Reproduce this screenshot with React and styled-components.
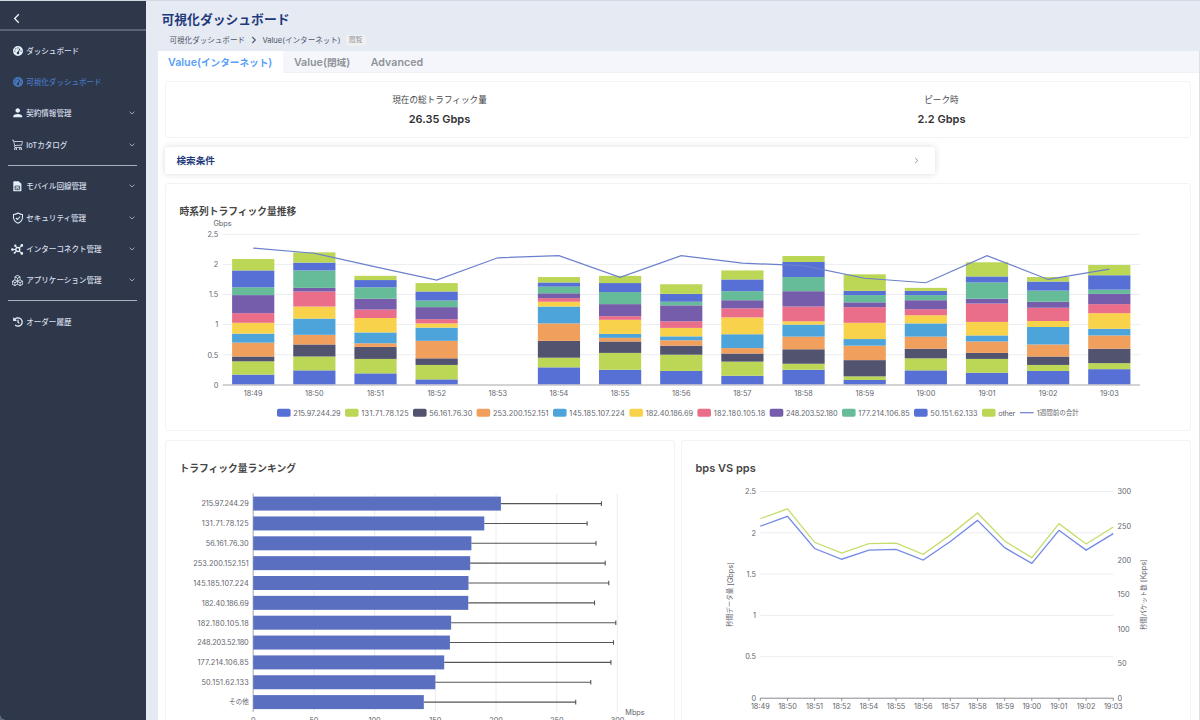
import styled, { createGlobalStyle } from 'styled-components'
import { FaGaugeHigh } from 'react-icons/fa6'
import { FaHistory } from 'react-icons/fa'
import { BsBoxes, BsCart3 } from 'react-icons/bs'
import { MdPerson } from 'react-icons/md'

const GlobalStyle = createGlobalStyle`
    * {
        box-sizing: border-box;
    }
    body {
        margin: 0;
        overflow: hidden;
        font-family: Inter, "Noto Sans CJK JP", sans-serif;
        color: #303133;
        background-color: #55706f;
    }
`
const Page = styled.div`
    display: flex;
    width: 1200px;
    height: 720px;
    overflow: hidden;
    background-color: #e6eaf3;
    border-top: 1px solid #d3d7e1;
    border-bottom-left-radius: 5px;
`
const Sidebar = styled.nav`
    width: 146px;
    flex-shrink: 0;
    margin-top: -1px;
    background-color: #2f374b;
    color: #dfe6f0;
`
const SidebarTop = styled.div`
    height: 31px;
    padding: 8px 0 0 12px;
    border-bottom: 2px solid #5b6273;
`
const MenuGroup = styled.div`
    margin: 0 9px 0 8px;
    padding: ${props => props.pad || '5px 0'};
    border-bottom: ${props => props.last ? 'none' : '1px solid #a9b1bd'};
`
const MenuItem = styled.div`
    display: flex;
    align-items: center;
    height: 31.3px;
    padding: 0 2px 0 3px;
    font-size: 7.55px;
    font-weight: 500;
    white-space: nowrap;
    color: ${props => props.active ? '#4678c0' : '#d5dde8'};
`
const MenuIcon = styled.span`
    display: flex;
    justify-content: center;
    width: 13px;
    margin-right: 2.2px;
    font-size: ${props => props.size || 11}px;
    color: ${props => props.active ? '#4678c0' : '#e4f1fb'};
    svg {
        flex-shrink: 0;
    }
`
const MenuLabel = styled.span`
    margin-top: -1px;
`
const MenuChevron = styled.span`
    display: flex;
    margin-left: auto;
`
const Main = styled.main`
    flex: 1;
    display: flex;
    flex-direction: column;
    min-width: 0;
    padding-left: 12px;
`
const Header = styled.header`
    height: 50px;
    flex-shrink: 0;
    padding: 9px 0 0 3.5px;
`
const PageTitle = styled.h1`
    margin: 0;
    font-size: 12.8px;
    line-height: 19px;
    font-weight: 700;
    color: #1f3a7d;
`
const Breadcrumb = styled.div`
    display: flex;
    align-items: center;
    height: 12px;
    margin-top: 4.5px;
    padding-left: 8px;
    font-size: 7.55px;
    color: #4d5566;
    white-space: nowrap;
`
const Separator = styled.span`
    display: flex;
    margin: 1px 5px 0 6.5px;
`
const Tag = styled.span`
    margin: 1px 0 0 5px;
    padding: 0 3.5px;
    border-radius: 2px;
    font-size: 6.6px;
    line-height: 11px;
    background-color: #f0f0f1;
    color: #8e9196;
`
const Panel = styled.div`
    flex: 1;
    display: flex;
    flex-direction: column;
    background-color: #fff;
    border-right: 1px solid #dcdfe6;
`
const Tabs = styled.div`
    display: flex;
    height: 22px;
    flex-shrink: 0;
    background-color: #f4f6fb;
    border-bottom: 1px solid #eff1f6;
`
const Tab = styled.div`
    height: 22px;
    padding: 0 10.6px 0 10px;
    margin-right: ${props => props.active ? '1px' : '0'};
    font-size: 9.65px;
    line-height: 23px;
    font-weight: 600;
    white-space: nowrap;
    background-color: ${props => props.active ? '#fff' : 'transparent'};
    color: ${props => props.active ? '#579ff8' : '#8f9399'};
`
const Latin = styled.span`
    font-size: 10.7px;
`
const Content = styled.div`
    display: flex;
    flex-direction: column;
    padding: 8px 8px 0 7px;
`
const Card = styled.section`
    border: 1px solid #f2f3f5;
    border-radius: 3px;
    background-color: #fff;
    height: ${props => props.height}px;
`
const Metrics = styled(Card)`
    display: grid;
    grid-template-columns: 502px 502px;
    padding-left: 22.5px;
`
const Metric = styled.div`
    padding-top: 10px;
    text-align: center;
`
const MetricLabel = styled.div`
    font-size: 8.65px;
    line-height: 16px;
    color: #48494c;
`
const MetricValue = styled.div`
    margin-top: 3px;
    font-size: 11px;
    line-height: 16px;
    font-weight: 600;
`
const SearchBar = styled.div`
    display: flex;
    align-items: center;
    justify-content: space-between;
    width: 770px;
    height: 27px;
    margin: 9px 0;
    padding: 0 15px 1px 11.5px;
    border-radius: 2px;
    background-color: #fff;
    box-shadow: 0 0 6px rgba(0, 0, 0, 0.15);
    font-size: 9.65px;
    font-weight: 700;
    color: #1f3a7d;
`
const BottomRow = styled.div`
    display: grid;
    grid-template-columns: 510px 510px;
    gap: 6px;
    margin-top: 9px;
`
const CardTitle = styled.h2`
    margin: 0;
    height: 34px;
    padding: ${props => props.top || 21}px 0 0 13.5px;
    font-size: ${props => props.size || 9.75}px;
    line-height: 14px;
    font-weight: 600;
    color: #464646;
`
const Chart = styled.svg`
    display: block;
    overflow: visible;
    font-size: 7.3px;
    text {
        fill: #63656d;
        dominant-baseline: central;
    }
`
// kana and kanji are set a little smaller than the digits beside them
const Kanji = styled.tspan`
    font-size: 6.5px;
`

const COLORS = ['#5770d6', '#bcd656', '#51536f', '#f19f5d', '#4da4db', '#f9d24b', '#ea6d8a', '#755dab', '#66bb99', '#5770d6', '#bcd656']

// cumulative top of each stacked segment, in Gbps
const TRAFFIC = [
    { time: '18:49', tops: [.17, .39, .47, .70, .85, 1.03, 1.19, 1.49, 1.62, 1.90, 2.09], lastWeek: 2.27 },
    { time: '18:50', tops: [.24, .47, .67, .83, 1.10, 1.30, 1.55, 1.61, 1.90, 2.03, 2.20], lastWeek: 2.185 },
    { time: '18:51', tops: [.19, .43, .63, .69, .87, 1.11, 1.25, 1.43, 1.62, 1.74, 1.81], lastWeek: 1.96 },
    { time: '18:52', tops: [.09, .33, .44, .73, .95, 1.02, 1.09, 1.29, 1.40, 1.55, 1.69], lastWeek: 1.74 },
    { time: '18:53', tops: [], lastWeek: 2.11 },
    { time: '18:54', tops: [.29, .45, .73, 1.02, 1.30, 1.38, 1.44, 1.52, 1.63, 1.70, 1.79], lastWeek: 2.145 },
    { time: '18:55', tops: [.25, .53, .72, .78, .845, 1.08, 1.14, 1.34, 1.54, 1.69, 1.81], lastWeek: 1.785 },
    { time: '18:56', tops: [.23, .50, .65, .74, .805, .945, 1.055, 1.32, 1.38, 1.51, 1.67], lastWeek: 2.145 },
    { time: '18:57', tops: [.15, .385, .52, .61, .84, 1.12, 1.27, 1.405, 1.555, 1.75, 1.90], lastWeek: 2.02 },
    { time: '18:58', tops: [.25, .35, .59, .80, 1.0, 1.055, 1.30, 1.555, 1.79, 2.04, 2.14], lastWeek: 1.98 },
    { time: '18:59', tops: [.08, .14, .41, .65, .76, 1.03, 1.29, 1.37, 1.49, 1.56, 1.835], lastWeek: 1.77 },
    { time: '19:00', tops: [.24, .44, .60, .80, 1.02, 1.155, 1.255, 1.405, 1.49, 1.56, 1.61], lastWeek: 1.695 },
    { time: '19:01', tops: [.20, .43, .53, .72, .82, 1.045, 1.35, 1.43, 1.70, 1.80, 2.035], lastWeek: 2.145 },
    { time: '19:02', tops: [.23, .33, .47, .67, .96, 1.06, 1.28, 1.38, 1.565, 1.715, 1.79], lastWeek: 1.75 },
    { time: '19:03', tops: [.26, .36, .60, .82, .93, 1.19, 1.34, 1.51, 1.58, 1.82, 1.99], lastWeek: 1.92 },
]

const LEGEND = [
    { label: '215.97.244.29', x: 111, width: 47.3 },
    { label: '131.71.78.125', x: 179, width: 47.3 },
    { label: '56.161.76.30', x: 247, width: 43 },
    { label: '253.200.152.151', x: 310.6, width: 55.5 },
    { label: '145.185.107.224', x: 387, width: 55.5 },
    { label: '182.40.186.69', x: 463.4, width: 47.3 },
    { label: '182.180.105.18', x: 531.4, width: 51.5 },
    { label: '248.203.52.180', x: 603.7, width: 51.5 },
    { label: '177.214.106.85', x: 676, width: 51.5 },
    { label: '50.151.62.133', x: 748, width: 47.3 },
    { label: 'other', x: 816, width: 17 },
]

const RANKING = [
    { label: '215.97.244.29', value: 204, max: 286.8, width: 47.3 },
    { label: '131.71.78.125', value: 190.3, max: 275, width: 47 },
    { label: '56.161.76.30', value: 179.7, max: 282.3, width: 43 },
    { label: '253.200.152.151', value: 178.7, max: 289.9, width: 55.5 },
    { label: '145.185.107.224', value: 177.3, max: 292.8, width: 55.5 },
    { label: '182.40.186.69', value: 177.1, max: 281.1, width: 47 },
    { label: '182.180.105.18', value: 163, max: 298.6, width: 51.3 },
    { label: '248.203.52.180', value: 162, max: 296.7, width: 51.5 },
    { label: '177.214.106.85', value: 157.3, max: 294.6, width: 51.3 },
    { label: '50.151.62.133', value: 150, max: 278, width: 47.3 },
    { label: 'その他', value: 140.5, max: 265.6 },
]

const BPS = [2.08, 2.2, 1.81, 1.68, 1.79, 1.80, 1.67, 1.895, 2.15, 1.82, 1.63, 2.03, 1.79, 1.99]
const PPS = [2.17, 2.29, 1.885, 1.755, 1.87, 1.875, 1.74, 1.975, 2.24, 1.90, 1.70, 2.11, 1.865, 2.07]

const Chevron = () => (
    <svg width="6" height="4" viewBox="0 0 6 4" fill="none" stroke="#a9b2bf" strokeWidth="0.9">
        <path d="M0.6 0.7 L3 3 L5.4 0.7" />
    </svg>
)

const SimIcon = () => (
    <svg width="1em" height="1em" viewBox="0 0 24 24">
        <path d="M5 0.5 H15 L21.5 6.5 V21.5 Q21.5 23.5 19.5 23.5 H5 Q3 23.5 3 21.5 V2.5 Q3 0.5 5 0.5 Z" fill="currentColor" />
        <path d="M7 11.5 H17.5 V20 H7 Z M7 15.5 H10.5 M14 15.5 H17.5 M12.2 15.5 V20" fill="none" stroke="#2f374b" strokeWidth="1.7" />
    </svg>
)

const ShieldIcon = () => (
    <svg width="1em" height="1em" viewBox="0 0 24 24" fill="none" stroke="currentColor" strokeWidth="2.1" strokeLinejoin="round">
        <path d="M12 2 Q16.5 4.8 21 5 V10.5 Q21 18.5 12 22.3 Q3 18.5 3 10.5 V5 Q7.5 4.8 12 2 Z" />
        <path d="M7.8 12 L11 15 L16.3 9" />
    </svg>
)

// hub with five satellites
const InterconnectIcon = () => (
    <svg width="1em" height="1em" viewBox="0 0 24 24" fill="currentColor" stroke="currentColor" strokeWidth="2">
        <path d="M3 12.5 H9 M8.5 5.5 L11 9 M15.5 10 L20 5.5 M15.5 15 L20 19.5 M10.5 15.5 L7 18.5" />
        <circle cx="13" cy="12.5" r="3.8" fill="none" strokeWidth="2.6" />
        <circle cx="2.8" cy="12.5" r="1.6" />
        <circle cx="8.2" cy="5" r="1.3" />
        <circle cx="20.8" cy="4.6" r="1.6" />
        <circle cx="20.8" cy="20" r="1.6" />
        <circle cx="7" cy="18.8" r="1" />
    </svg>
)

const Item = ({ icon: Icon, size, label, active, expandable }) => (
    <MenuItem active={active}>
        <MenuIcon size={size} active={active}><Icon /></MenuIcon>
        <MenuLabel>{label}</MenuLabel>
        {expandable && <MenuChevron><Chevron /></MenuChevron>}
    </MenuItem>
)

const SideMenu = () => (
    <Sidebar>
        <SidebarTop>
            <svg width="9" height="11" viewBox="0 0 9 11" fill="none" stroke="#f2f5f9" strokeWidth="1.3">
                <path d="M6.8 1.3 L2.6 5.5 L6.8 9.7" />
            </svg>
        </SidebarTop>
        <MenuGroup pad="4px 0 4.5px">
            <Item icon={FaGaugeHigh} size={10} label="ダッシュボード" />
            <Item icon={FaGaugeHigh} size={10} label="可視化ダッシュボード" active />
            <Item icon={MdPerson} size={13.5} label="契約情報管理" expandable />
            <Item icon={BsCart3} size={11.5} label="IoTカタログ" expandable />
        </MenuGroup>
        <MenuGroup pad="5px 0 4.5px">
            <Item icon={SimIcon} size={10.5} label="モバイル回線管理" expandable />
            <Item icon={ShieldIcon} size={12} label="セキュリティ管理" expandable />
            <Item icon={InterconnectIcon} size={12.5} label="インターコネクト管理" expandable />
            <Item icon={BsBoxes} size={11} label="アプリケーション管理" expandable />
        </MenuGroup>
        <MenuGroup last>
            <Item icon={FaHistory} size={10} label="オーダー履歴" />
        </MenuGroup>
    </Sidebar>
)

const TrafficChart = () => {
    const y = v => 166.8 - v * 60.2
    const x = i => 87.2 + i * 61.15
    return (
        <Chart width="1024" height="212">
            <text x="56.5" y="5" textAnchor="middle">Gbps</text>
            {[0, 0.5, 1, 1.5, 2, 2.5].map(v => (
                <g key={v}>
                    {v > 0 && <line x1="56.6" x2="974" y1={y(v)} y2={y(v)} stroke="#e6e8ef" strokeWidth="0.8" />}
                    <text x="52.3" y={y(v) + 0.3} textAnchor="end">{v}</text>
                </g>
            ))}
            {TRAFFIC.map((row, i) => (
                <g key={row.time}>
                    {row.tops.map((top, n) => (
                        <rect key={n} x={x(i) - 21.1} width="42.2" y={y(top)} height={(top - (row.tops[n - 1] || 0)) * 60.2} fill={COLORS[n]} />
                    ))}
                    <text x={x(i)} y="175" textAnchor="middle">{row.time}</text>
                </g>
            ))}
            <line x1="56.6" x2="974" y1="167" y2="167" stroke="#c4c5c9" strokeWidth="1.3" />
            <polyline points={TRAFFIC.map((row, i) => `${x(i)},${y(row.lastWeek)}`).join(' ')} fill="none" stroke="#6b80cd" strokeWidth="1.2" />
            {LEGEND.map((item, i) => (
                <g key={item.label}>
                    <rect x={item.x} y="190.7" width="13.6" height="8" rx="1.8" fill={COLORS[i]} />
                    <text x={item.x + 16.3} y="195.1" textLength={item.width}>{item.label}</text>
                </g>
            ))}
            <line x1="854" x2="867.7" y1="194.7" y2="194.7" stroke="#6b80cd" strokeWidth="1.2" />
            <text x="870.7" y="195.1">1<Kanji>週間前の合計</Kanji></text>
        </Chart>
    )
}

const RankingChart = () => {
    const x = v => 87.2 + v * 1.2143
    return (
        <Chart width="508" height="250">
            {[0, 50, 100, 150, 200, 250, 300].map(v => (
                <g key={v}>
                    <line x1={x(v)} x2={x(v)} y1="18.5" y2="237" stroke={v ? '#e6e8ef' : '#b9babd'} strokeWidth={v ? 0.8 : 1.3} />
                    <text x={x(v)} y="245" textAnchor="middle">{v}</text>
                </g>
            ))}
            {RANKING.map((row, i) => {
                const y = 28.6 + i * 19.85
                return (
                    <g key={row.label}>
                        <text x="82.7" y={y + 0.3} textAnchor="end" textLength={row.width}>
                            {row.width ? row.label : <Kanji>{row.label}</Kanji>}
                        </text>
                        <rect x={x(0)} y={y - 7} width={row.value * 1.2143} height="14" fill="#5b6fc0" />
                        <path d={`M${x(row.value)} ${y} H${x(row.max)} M${x(row.max)} ${y - 2.3} V${y + 2.3}`} stroke="#55565a" strokeWidth="1.1" />
                    </g>
                )
            })}
            <text x="459.3" y="237">Mbps</text>
        </Chart>
    )
}

const BpsChart = () => {
    const y = v => 223 - v * 82.6
    const x = i => 78.3 + i * 27.15
    const points = data => data.map((v, i) => `${x(i)},${y(v)}`).join(' ')
    const times = TRAFFIC.filter(row => row.tops.length).map(row => row.time)
    return (
        <Chart width="508" height="250">
            {[0, 0.5, 1, 1.5, 2, 2.5].map(v => (
                <g key={v}>
                    {v > 0 && <line x1="78.3" x2="431.3" y1={y(v)} y2={y(v)} stroke="#e6e8ef" strokeWidth="0.8" />}
                    <text x="74" y={y(v) + 0.2} textAnchor="end">{v}</text>
                </g>
            ))}
            {[0, 50, 100, 150, 200, 250, 300].map(v => (
                <text key={v} x="435.5" y={223.2 - v * 0.6883}>{v}</text>
            ))}
            <line x1="78.3" x2="431.3" y1="223.2" y2="223.2" stroke="#7b7d84" strokeWidth="0.9" />
            {times.map((time, i) => (
                <g key={time}>
                    <line x1={x(i)} x2={x(i)} y1="223" y2="226" stroke="#7b7d84" strokeWidth="0.8" />
                    <text x={x(i)} y="231" textAnchor="middle">{time}</text>
                </g>
            ))}
            <polyline points={points(BPS)} fill="none" stroke="#7389e6" strokeWidth="1.3" />
            <polyline points={points(PPS)} fill="none" stroke="#c5dd6a" strokeWidth="1.3" />
            <text transform="translate(48 119.5) rotate(-90)" textAnchor="middle"><Kanji>秒間データ量</Kanji> [Gbps]</text>
            <text transform="translate(461.5 119.5) rotate(-90)" textAnchor="middle"><Kanji>秒間パケット数</Kanji> [Kpps]</text>
        </Chart>
    )
}

const App = () => {
    return (
        <Page>
            <GlobalStyle />
            <SideMenu />
            <Main>
                <Header>
                    <PageTitle>可視化ダッシュボード</PageTitle>
                    <Breadcrumb>
                        可視化ダッシュボード
                        <Separator>
                            <svg width="6" height="8" viewBox="0 0 6 8" fill="none" stroke="#4d5566" strokeWidth="1.1">
                                <path d="M1.3 1 L4.3 4 L1.3 7" />
                            </svg>
                        </Separator>
                        Value(インターネット)
                        <Tag>閲覧</Tag>
                    </Breadcrumb>
                </Header>
                <Panel>
                    <Tabs>
                        <Tab active><Latin>Value(</Latin>インターネット<Latin>)</Latin></Tab>
                        <Tab><Latin>Value(</Latin>閉域<Latin>)</Latin></Tab>
                        <Tab><Latin>Advanced</Latin></Tab>
                    </Tabs>
                    <Content>
                        <Metrics height={57}>
                            <Metric>
                                <MetricLabel>現在の総トラフィック量</MetricLabel>
                                <MetricValue>26.35 Gbps</MetricValue>
                            </Metric>
                            <Metric>
                                <MetricLabel>ピーク時</MetricLabel>
                                <MetricValue>2.2 Gbps</MetricValue>
                            </Metric>
                        </Metrics>
                        <SearchBar>
                            検索条件
                            <svg width="7" height="7" viewBox="0 0 7 7" fill="none" stroke="#85888e" strokeWidth="0.9">
                                <path d="M2.2 1 L4.8 3.5 L2.2 6" />
                            </svg>
                        </SearchBar>
                        <Card height={248}>
                            <CardTitle>時系列トラフィック量推移</CardTitle>
                            <TrafficChart />
                        </Card>
                        <BottomRow>
                            <Card height={300}>
                                <CardTitle>トラフィック量ランキング</CardTitle>
                                <RankingChart />
                            </Card>
                            <Card height={300}>
                                <CardTitle size={11} top={20}>bps VS pps</CardTitle>
                                <BpsChart />
                            </Card>
                        </BottomRow>
                    </Content>
                </Panel>
            </Main>
        </Page>
    )
}

export default App
